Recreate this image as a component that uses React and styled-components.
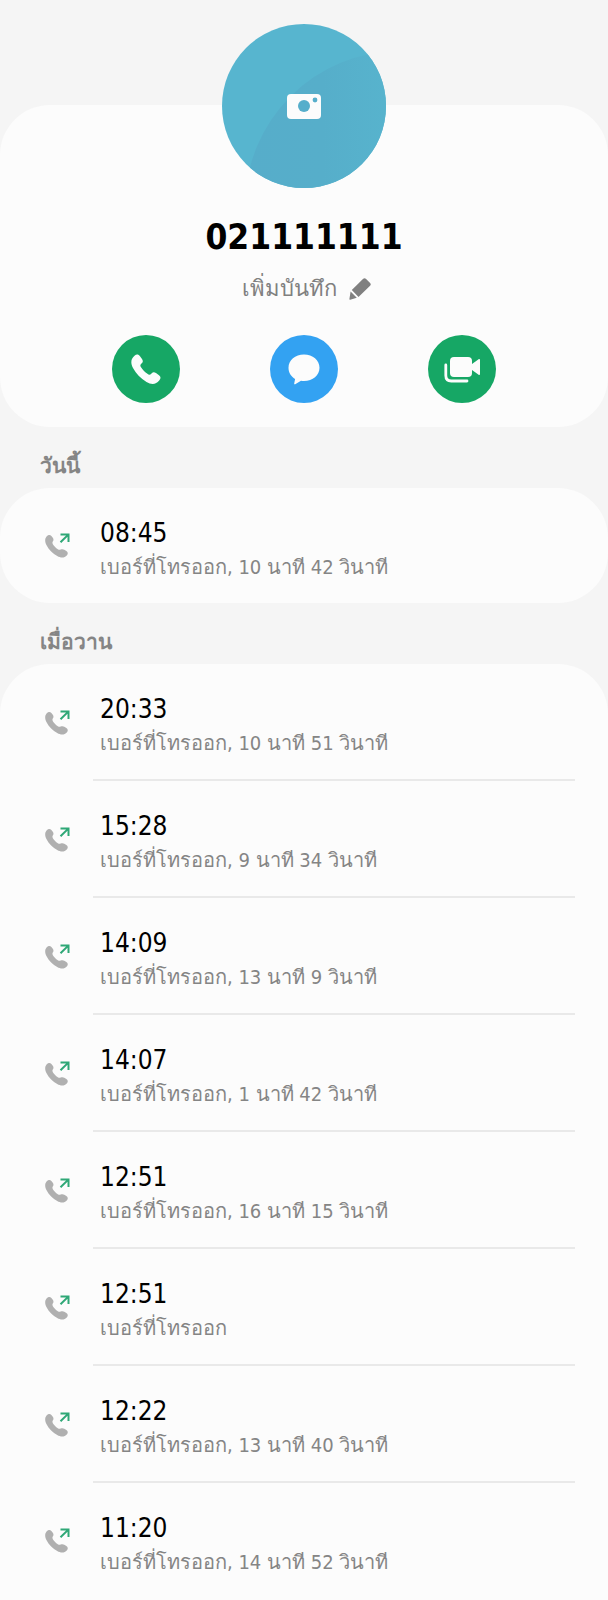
import React from 'react'
import styled, { createGlobalStyle } from 'styled-components';

const groups = [
    {
        day: 'วันนี้',
        calls: [
            { time: '08:45', detail: 'เบอร์ที่โทรออก, 10 นาที 42 วินาที' },
        ],
    },
    {
        day: 'เมื่อวาน',
        open: true,
        calls: [
            { time: '20:33', detail: 'เบอร์ที่โทรออก, 10 นาที 51 วินาที' },
            { time: '15:28', detail: 'เบอร์ที่โทรออก, 9 นาที 34 วินาที' },
            { time: '14:09', detail: 'เบอร์ที่โทรออก, 13 นาที 9 วินาที' },
            { time: '14:07', detail: 'เบอร์ที่โทรออก, 1 นาที 42 วินาที' },
            { time: '12:51', detail: 'เบอร์ที่โทรออก, 16 นาที 15 วินาที' },
            { time: '12:51', detail: 'เบอร์ที่โทรออก' },
            { time: '12:22', detail: 'เบอร์ที่โทรออก, 13 นาที 40 วินาที' },
            { time: '11:20', detail: 'เบอร์ที่โทรออก, 14 นาที 52 วินาที' },
        ],
    },
];

const AvatarArt = () => (
    <svg width="164" height="164" viewBox="0 0 164 164" aria-hidden="true">
        <defs>
            <clipPath id="disc"><circle cx="82" cy="82" r="82" /></clipPath>
            <linearGradient id="shade" x1="0" y1="0" x2="1" y2="0" gradientUnits="objectBoundingBox">
                <stop offset="0" stopColor="#56adca" />
                <stop offset=".25" stopColor="#56aeca" />
                <stop offset=".45" stopColor="#57b3cd" />
            </linearGradient>
        </defs>
        <g clipPath="url(#disc)">
            <rect width="164" height="164" fill="#57b5cf" />
            <circle cx="178" cy="182" r="155" fill="url(#shade)" />
        </g>
        <rect x="65" y="70" width="34" height="25" rx="4" fill="#fcfcfc" />
        <circle cx="82" cy="82" r="6" fill="#56aecb" />
        <circle cx="93" cy="76" r="2.4" fill="#56aecb" />
    </svg>
);

const PencilIcon = () => (
    <svg width="22" height="22" viewBox="0 0 22 22" fill="#808080" aria-hidden="true">
        <path d="M14.2.8C15.1 0 16.2 0 17.1.9L21.1 4.9C22 5.8 22 6.8 21.1 7.7L9.5 19L2.8 12Z" />
        <path d="M1.6 13.4L7.8 19.8L1.2 21.8C.6 22 .3 21.6.4 21Z" />
    </svg>
);

const PhoneIcon = () => (
    <svg width="30" height="31" viewBox="0 0 30 31" fill="#fcfcfc" aria-hidden="true">
        <path d="M3.5 1.8C5.5-.2 7.5.2 9 2.2L11 5C12.3 7 12 8 10.5 9.5C9 11 9 12 10.2 13.6C11.8 16 14 18.2 16.4 19.8C18 21 19 21 20.5 19.5C22 18 23 17.8 25 19L28 21.2C30 22.8 30 24.6 28.2 26.6C25 30.5 20.5 31 15.5 28C9.5 24.5 5 19.5 2 14C-.6 9-.2 5 3.5 1.8Z" />
    </svg>
);

const MessageIcon = () => (
    <svg width="32" height="32" viewBox="0 0 32 32" fill="#fcfcfc" aria-hidden="true">
        <path d="M16 1.5C24.8 1.5 31.5 7.2 31.5 14.8S24.8 28 16 28C15 28 14 27.9 13 27.7L7.2 31.2C6.5 31.6 6 31.2 6.2 30.4L7.1 26C2.9 23.6.5 19.5.5 14.8C.5 7.2 7.2 1.5 16 1.5Z" />
    </svg>
);

const VideoIcon = () => (
    <svg width="36" height="27" viewBox="0 0 36 27" aria-hidden="true">
        <rect x="6" y="1" width="22" height="20" rx="4" fill="#fcfcfc" />
        <path d="M28 8L34.6 3.2C35.3 2.8 36 3 36 4V18C36 19 35.3 19.2 34.6 18.8L28 14Z" fill="#fcfcfc" />
        <path d="M1.8 9V19.5Q1.8 25 7.3 25H23" fill="none" stroke="#fcfcfc" strokeWidth="2.8" strokeLinecap="round" />
    </svg>
);

const OutgoingIcon = () => (
    <svg width="26" height="26" viewBox="0 0 26 26" aria-hidden="true">
        <path d="M1.6 3.6C3 1.8 5 1.6 6.4 3L7.8 4.8C8.8 6.2 8.6 7.4 7.8 8.6C7.2 9.6 7.4 10.4 8 11.4C9.2 13.2 10.8 14.9 12.8 16.2C13.8 16.9 14.6 17 15.6 16.6C16.9 16 18 16 19.3 16.7L21.4 18C23 19.2 23.2 20.7 22 22.2C19.5 25 16.2 25.4 12.2 23.1C7.8 20.7 4 17 1.7 12.6C-.2 8.8-.4 6 1.6 3.6Z" fill="#b0b0b0" />
        <path d="M15.5 9.3L23.3 1.6M15.5 1.4H23.5V9" fill="none" stroke="#2fa877" strokeWidth="2" />
    </svg>
);

const Call = props => {
    return (
        <CallRow>
            <OutgoingIcon />
            <CallInfo>
                <CallTime>{props.time}</CallTime>
                <CallDetail>{props.detail}</CallDetail>
            </CallInfo>
        </CallRow>
    )
}

const App = () => {
    return (
        <Page>
            <GlobalStyle />
            <ContactCard>
                <AvatarButton type="button" aria-label="รูปภาพ"><AvatarArt /></AvatarButton>
                <PhoneNumber>021111111</PhoneNumber>
                <NoteButton type="button">เพิ่มบันทึก<PencilIcon /></NoteButton>
                <Actions>
                    <ActionButton type="button" color="#16a765" aria-label="โทร"><PhoneIcon /></ActionButton>
                    <ActionButton type="button" color="#33a2f2" aria-label="ข้อความ"><MessageIcon /></ActionButton>
                    <ActionButton type="button" color="#16a765" aria-label="วิดีโอคอล"><VideoIcon /></ActionButton>
                </Actions>
            </ContactCard>
            {groups.map(group => (
                <DaySection key={group.day} $open={group.open}>
                    <DayLabel>{group.day}</DayLabel>
                    <CallList $open={group.open}>
                        {group.calls.map((call, i) => (
                            <Call key={i} time={call.time} detail={call.detail} />
                        ))}
                    </CallList>
                </DaySection>
            ))}
        </Page>
    )
}

const GlobalStyle = createGlobalStyle`
    * {
        box-sizing: border-box;
    }
    body {
        margin: 0;
        background: #f5f5f5;
        font-family: "DejaVu Sans Condensed", "Liberation Sans", sans-serif;
    }
    button {
        border: 0;
        padding: 0;
        background: none;
        font: inherit;
        cursor: pointer;
    }
    svg {
        display: block;
        flex: none;
    }
`
const Page = styled.main`
    display: flex;
    flex-direction: column;
    min-height: 100vh;
    padding-top: 105px;
`
const ContactCard = styled.header`
    display: flex;
    flex-direction: column;
    align-items: center;
    padding-bottom: 24px;
    border-radius: 50px;
    background: #fcfcfc;
`
const AvatarButton = styled.button`
    margin-top: -81px;
    border-radius: 50%;
`
const PhoneNumber = styled.h1`
    margin: 25px 0 0;
    font-size: 35px;
    line-height: 48px;
    color: #000;
`
const NoteButton = styled.button`
    display: flex;
    align-items: center;
    gap: 12px;
    margin: 12px 0 30px;
    padding-left: 4px;
    font-size: 22px;
    line-height: 32px;
    color: #808080;
`
const Actions = styled.div`
    display: flex;
    justify-content: space-evenly;
    width: 100%;
    padding: 0 22px;
`
const ActionButton = styled.button`
    display: flex;
    align-items: center;
    justify-content: center;
    width: 68px;
    height: 68px;
    border-radius: 50%;
    background: ${props => props.color};
`
const DaySection = styled.section`
    display: flex;
    flex-direction: column;
    flex-grow: ${props => props.$open ? 1 : 0};
`
const DayLabel = styled.h2`
    margin: 0;
    padding: 23px 40px 6px;
    font-size: 21px;
    line-height: 32px;
    color: #858585;
`
const CallList = styled.ul`
    flex-grow: 1;
    margin: 0;
    padding: 0;
    list-style: none;
    border-radius: ${props => props.$open ? '50px 50px 0 0' : '50px'};
    background: #fcfcfc;
`
const CallRow = styled.li`
    display: flex;
    align-items: center;
    gap: 22px;
    padding-left: 45px;
    padding-right: 33px;
`
const CallInfo = styled.div`
    flex: 1;
    padding: 27px 0 20px 7px;
    ${CallRow}:not(:last-child) > & {
        border-bottom: 2px solid #e9e9e9;
    }
`
const CallTime = styled.time`
    display: block;
    font-size: 26px;
    line-height: 36px;
    color: #000;
`
const CallDetail = styled.p`
    margin: 0;
    font-size: 20px;
    line-height: 32px;
    color: #858585;
`

export default App;
